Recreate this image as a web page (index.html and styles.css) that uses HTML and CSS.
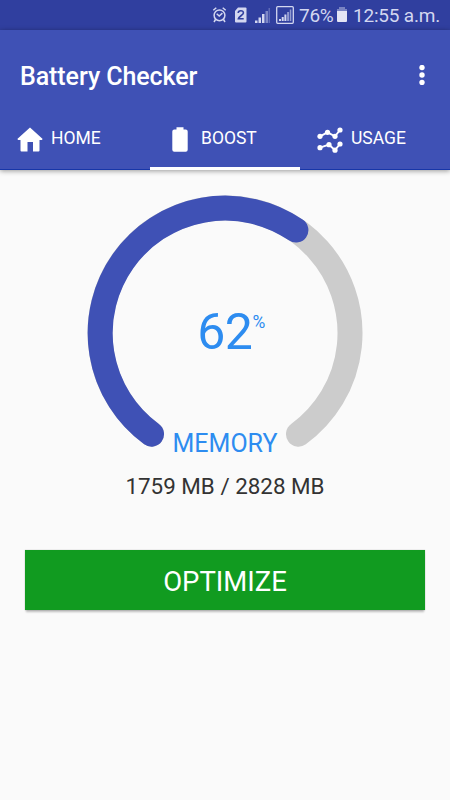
FILE: index.html
```
<!DOCTYPE html>
<html lang="en">
<head>
<meta charset="utf-8">
<title>Battery Checker</title>
<link rel="stylesheet" href="styles.css">
</head>
<body>
<div class="status">
  <svg class="status-icons" width="84" height="20" viewBox="0 0 84 20">
    <g fill="none" stroke="#d3d7f0" stroke-width="1.5">
      <circle cx="7.5" cy="10.3" r="5.4"/>
      <path d="M1.3 5.3 4.3 2.7M10.7 2.7l3 2.6M4.7 8.8l2.5 2.3 3.2-3M3.5 14.5 2 17M11.5 14.5 13 17"/>
    </g>
    <path fill="#d3d7f0" d="M26 2.500h7.500q1 0 1 1v13q0 1-1 1H24q-1 0-1-1V6z"/>
    <path fill="none" stroke="#303f9f" stroke-width="1.6" d="M26.200 8q0-2.300 2.600-2.300T31.400 8c0 2-4.800 3.500-5.100 5.800h5.400"/>
    <path fill="#d3d7f0" d="M43 15.500h2.500V18H43zM46.500 12.500H49V18h-2.500zM50 9h2.500v9H50z"/>
    <path fill="#7f89c7" d="M53.500 6H56v12h-2.500z"/><path fill="#5f6bb8" d="M56.500 3H58v15h-1.500z"/>
    <rect x="64.700" y="1.700" width="16.600" height="16.600" rx="1" fill="none" stroke="#d3d7f0" stroke-width="1.300"/>
    <path fill="#d3d7f0" d="M67 14h2v2h-2zM69.700 12h2v4h-2zM72.400 9.500h2V16h-2z"/>
    <path fill="#929bd1" d="M75.100 7h2v9h-2zM77.800 4.500h1.500V16h-1.500z"/>
  </svg>
  <span class="percent">76%</span>
  <svg class="status-battery" width="12" height="16" viewBox="0 0 12 16"><path fill="#7983c2" d="M3 0h6v2h2v3H1V2h2z"/><path fill="#e4e5f4" d="M1 4h10v10q0 1-1 1H2q-1 0-1-1z"/></svg>
  <span class="clock">12:55 a.m.</span>
</div>
<header class="header">
  <div class="appbar">
    <h1 class="title">Battery Checker</h1>
    <svg class="more" width="6" height="20" viewBox="0 0 6 20" fill="#fff"><circle cx="3" cy="2.500" r="2.700"/><circle cx="3" cy="10" r="2.700"/><circle cx="3" cy="17.500" r="2.700"/></svg>
  </div>
  <nav class="tabs">
    <div class="tab">
      <svg class="tab-icon" width="26" height="26" viewBox="0 0 26 26"><path fill="#fff" d="M13 .5 25.700 12 24.800 13H22.500v10.500q0 1-1 1H16V15h-5.500v9.500H4.500q-1 0-1-1V13H1.200L.300 12z"/></svg>
      <span>HOME</span>
    </div>
    <div class="tab active">
      <svg class="tab-icon" width="26" height="26" viewBox="0 0 26 26"><path fill="#fff" d="M9.500 .3h7v2.300h2.200q2 0 2 2v18.200q0 2-2 2H7.300q-2 0-2-2V4.600q0-2 2-2h2.200z"/></svg>
      <span>BOOST</span>
    </div>
    <div class="tab">
      <svg class="tab-icon" width="26" height="26" viewBox="0 0 26 26"><path fill="none" stroke="#fff" stroke-width="1.900" d="m3 9.300 7.500-4L18 9.300l5-6.300M3 20.700l9-3 6 5.500L23 17"/><g fill="#fff"><circle cx="3" cy="9.300" r="2.600"/><circle cx="10.500" cy="5.300" r="2.600"/><circle cx="18" cy="9.300" r="2.600"/><circle cx="23" cy="3" r="2.600"/><circle cx="3" cy="20.700" r="2.600"/><circle cx="12" cy="17.700" r="2.600"/><circle cx="18" cy="23.200" r="2.600"/><circle cx="23" cy="17" r="2.600"/></g></svg>
      <span>USAGE</span>
    </div>
  </nav>
</header>
<main class="content">
  <div class="gauge">
    <svg class="arc" width="276" height="276" viewBox="87 194.500 276 276" fill="none" stroke-width="25" stroke-linecap="round">
      <path stroke="#ccc" d="M151.530 433.630A125 125 0 1 1 298.470 433.630"/>
      <path stroke="#3f51b5" d="M151.530 433.630A125 125 0 0 1 295.900 229.560"/>
    </svg>
    <div class="value">62<span class="unit">%</span></div>
    <div class="label">MEMORY</div>
  </div>
  <p class="usage">1759 MB / 2828 MB</p>
  <button class="optimize">OPTIMIZE</button>
</main>
</body>
</html>
```
FILE: styles.css
```
* { box-sizing: border-box; }
body {
  margin: 0;
  height: 800px;
  background: #fafafa;
  font-family: Roboto, sans-serif;
  overflow: hidden;
}
.status {
  display: flex;
  align-items: center;
  height: 30px;
  padding-left: 212px;
  background: #303f9f;
  color: #d3d7f0;
  font-size: 19px;
  line-height: 28px;
  white-space: nowrap;
}
.status-icons { flex: none; margin-right: 3px; }
.percent { width: 35px; padding-top: 2px; letter-spacing: -0.300px; }
.status-battery { flex: none; margin: 0 5px 0 2px; }
.clock { padding-top: 2px; letter-spacing: -0.200px; }
.header {
  height: 140px;
  background: #3f51b5;
  border-bottom: 1px solid #1736a8;
  box-shadow: 0 1px 5px rgba(0, 0, 0, .4);
  color: #fff;
}
.appbar {
  display: flex;
  align-items: center;
  justify-content: space-between;
  height: 90px;
  padding: 0 25px 0 20px;
}
.title { margin: 2px 0 0; font-size: 25px; font-weight: 500; letter-spacing: -0.080px; }
.tabs { display: grid; grid-template-columns: repeat(3, 1fr); height: 50px; }
.tab {
  display: flex;
  align-items: flex-start;
  gap: 8px;
  padding: 7px 0 0 17px;
  border-bottom: 3px solid transparent;
  font-size: 17.500px;
  line-height: 22px;
}
.tab.active { border-color: #fff; }
.tab-icon { flex: none; }
.content { display: flex; flex-direction: column; align-items: center; padding-top: 24.500px; }
.gauge {
  display: grid;
  grid-template-rows: 234px 42px;
  justify-items: center;
  width: 276px;
  height: 276px;
  color: #2d8cf0;
}
.arc { grid-area: 1 / 1 / 3 / 2; }
.value {
  grid-area: 1 / 1;
  display: flex;
  align-items: flex-start;
  margin: 107px 0 0 12px;
  font-size: 50px;
  line-height: 60px;
  letter-spacing: -0.500px;
}
.unit { margin-top: 10px; font-size: 17.500px; line-height: 20px; }
.label { grid-area: 2 / 1; font-size: 25px; line-height: 30px; }
.usage { margin: 0; color: #333; font-size: 22.400px; line-height: 30px; }
.optimize {
  width: 400px;
  height: 60px;
  margin-top: 49.900px;
  padding: 4px 0 0;
  border: 0;
  background: #119b20;
  box-shadow: 0 3px 2px -1px rgba(0, 0, 0, .25), 0 0 1px rgba(0, 0, 0, .3);
  color: #fff;
  font: 27.500px/30px Roboto, sans-serif;
}
```
